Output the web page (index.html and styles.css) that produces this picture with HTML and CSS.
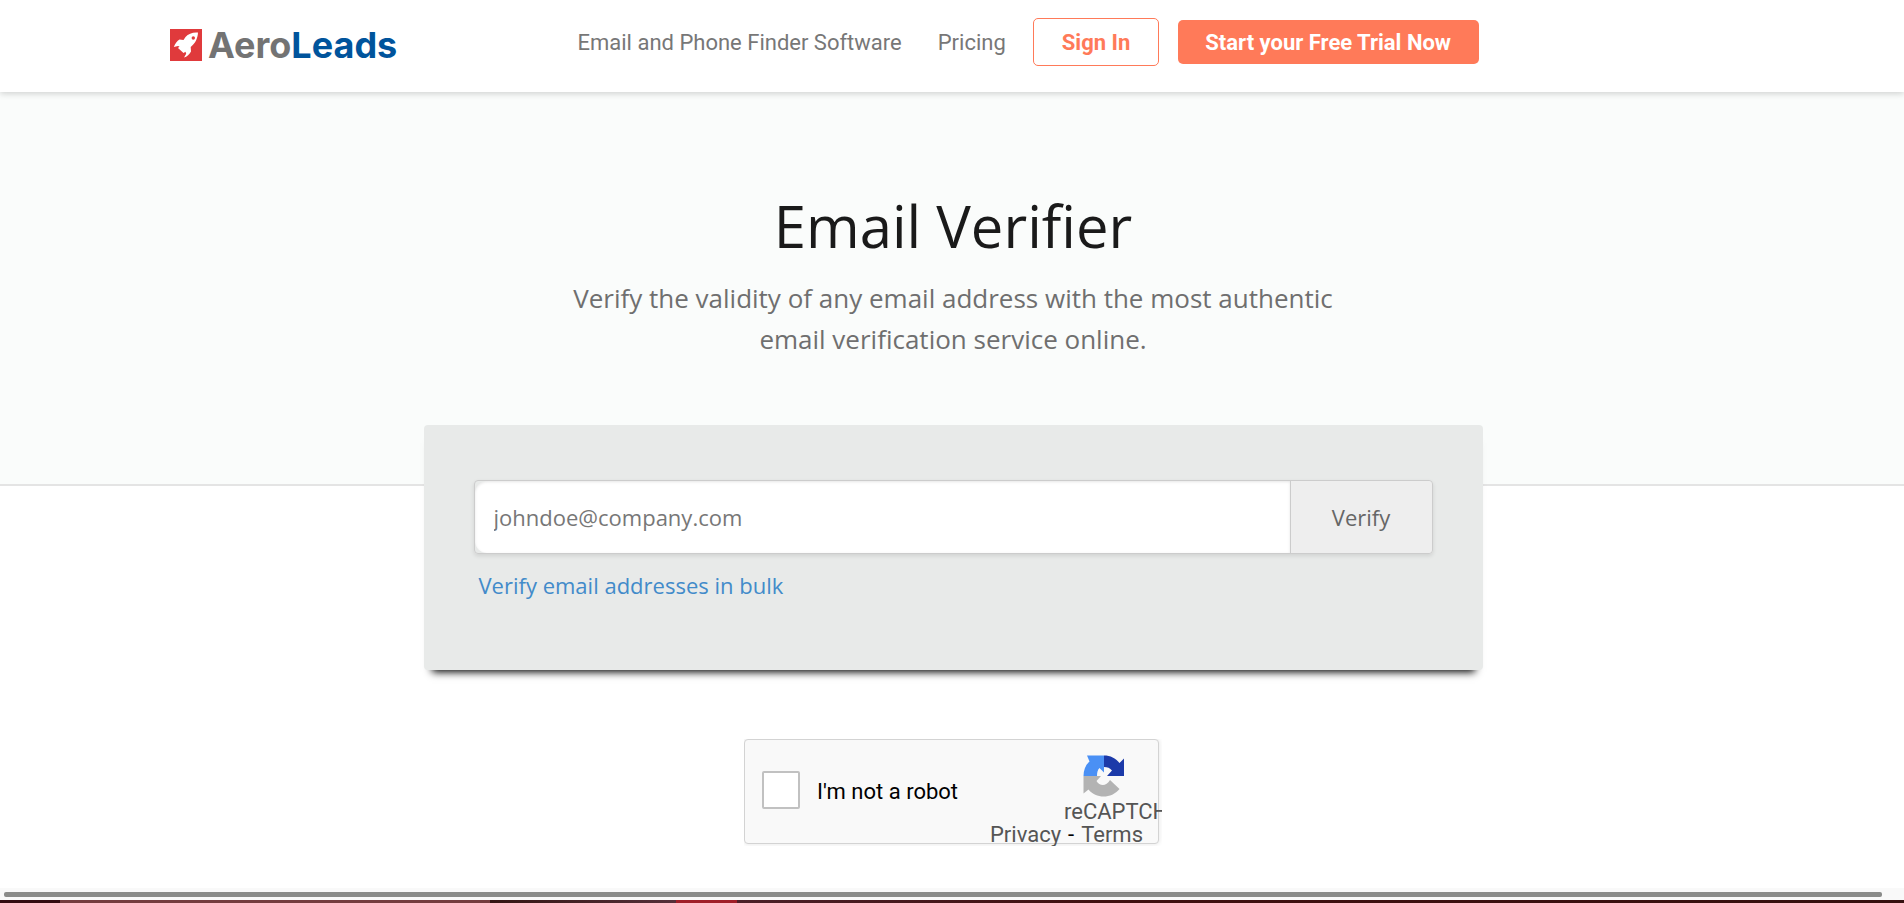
FILE: index.html
```html
<!DOCTYPE html>
<html lang="en">
<head>
    <meta charset="UTF-8">
    <meta name="viewport" content="width=device-width, initial-scale=1.0">
    <title>Email Verifier</title>
    <link rel="stylesheet" href="styles.css">
</head>
<body>
    <header class="header">
        <a href="#" class="logo">
            <svg class="logo-icon" viewBox="0 0 32 32" aria-hidden="true">
                <rect width="32" height="32" fill="#e03a3c"/>
                <path d="M28 3.500c-5-.5-9.500 1-12.500 4.500l-2 3-4-.4c-2.500 1.400-4.200 4-5.700 7.400l4.200-1 1.500.5-1.500 1.500 5.500 5 2-1.200.7 2-2.200 3.700c3-.8 5.500-3 7-6l-.3-4.500c4.500-3.500 7-8.500 7.300-14.500z" fill="#fff"/>
                <circle cx="23.300" cy="9" r="1.700" fill="#e03a3c"/>
            </svg>
            <span class="logo-text">Aero<b>Leads</b></span>
        </a>
        <nav class="nav">
            <a href="#" class="nav-link">Email and Phone Finder Software</a>
            <a href="#" class="nav-link">Pricing</a>
            <a href="#" class="btn btn-outline">Sign In</a>
            <a href="#" class="btn btn-primary">Start your Free Trial Now</a>
        </nav>
    </header>

    <main>
        <section class="hero">
            <h1>Email Verifier</h1>
            <p>Verify the validity of any email address with the most authentic email verification service online.</p>
        </section>

        <section class="panel">
            <form class="verify-form">
                <input type="email" class="verify-input" aria-label="Email address" placeholder="johndoe@company.com">
                <button type="submit" class="verify-button">Verify</button>
            </form>
            <a href="#" class="bulk-link">Verify email addresses in bulk</a>
        </section>

        <div class="captcha">
            <div class="captcha-box">
                <input type="checkbox" id="robot" class="captcha-check">
                <label for="robot">I'm not a robot</label>
            </div>
            <div class="captcha-brand">
                <svg class="captcha-icon" viewBox="0 0 42 42" aria-hidden="true">
                    <path d="M21 .500v17l-4.500-4.500c-2 2-2.500 4.500-2.500 8H.500c0-6 2-11 6-14.500L4 .500z" fill="#4a90f5"/>
                    <path d="M21 .500c6.500 0 11.500 2.500 15.500 7.500L41 3.500V21H24l5-5.500c-2-2.500-4.500-3.500-8-3.500z" fill="#1c3aa9"/>
                    <path d="M.500 21H18l-4.500 5c3 5 9.500 6 13.500-1l9.500 9c-8 10-23.500 10-31 .500L.500 38.500z" fill="#b3b3b3"/>
                </svg>
                <span class="captcha-name">reCAPTCHA</span>
            </div>
            <div class="captcha-links"><a href="#">Privacy</a><span>-</span><a href="#">Terms</a></div>
        </div>
    </main>

    <footer class="bottom">
        <div class="scroll-track"><div class="scroll-thumb"></div></div>
        <div class="strip"></div>
    </footer>
</body>
</html>
```
FILE: styles.css
```css
* {
    margin: 0;
    padding: 0;
    box-sizing: border-box;
}

body {
    display: flex;
    flex-direction: column;
    min-height: 100vh;
    overflow-x: hidden;
    font-family: "Open Sans", sans-serif;
    background-color: #fff;
    color: #6f6f6f;
}

a {
    text-decoration: none;
}

/* a little wider than the window */
main {
    flex: 1;
    width: calc(100% + 2px);
}

.header {
    position: relative;
    display: flex;
    justify-content: space-between;
    align-items: flex-start;
    height: 92px;
    padding: 18px 425px 0 170px;
    background-color: #fff;
    box-shadow: 0 2px 6px rgba(0, 0, 0, 0.16);
}

.logo {
    display: flex;
    align-items: center;
    gap: 6px;
    padding-top: 4px;
}

.logo-icon {
    width: 32px;
    height: 32px;
}

.logo-text {
    font-family: Inter, sans-serif;
    font-size: 36px;
    line-height: 46px;
    font-weight: bold;
    color: #737373;
}

.logo-text b {
    font-weight: bold;
    color: #00549c;
}

.nav {
    display: flex;
    align-items: center;
    font-family: Roboto, sans-serif;
    font-size: 22px;
    line-height: 26px;
}

.nav-link {
    margin-right: 36px;
    padding-top: 2px;
    color: #777;
}

.nav-link:nth-child(2) {
    margin-right: 27px;
}

.btn {
    padding: 10px 27px 8px;
    border-radius: 5px;
    font-weight: bold;
}

.btn-outline {
    padding: 11px 28px 9px;
    margin-right: 19px;
    border: 1px solid #ff7a59;
    color: #ff7a59;
}

.btn-primary {
    padding-right: 28px;
    background-color: #ff7a59;
    color: #fff;
}

.hero {
    height: 394px;
    padding-top: 94px;
    border-bottom: 2px solid #e4e4e4;
    background-color: #fafcfb;
    text-align: center;
}

.hero h1 {
    font-size: 58px;
    line-height: 80px;
    font-weight: normal;
    color: #1a1a1a;
}

.hero p {
    width: 800px;
    margin: 12px auto 0;
    font-size: 26px;
    line-height: 41px;
}

.panel {
    position: relative;
    width: 1059px;
    height: 245px;
    margin: -61px auto 0;
    padding: 55px 50px;
    border-radius: 4px;
    background-color: #e8eae9;
    box-shadow: 0 10px 8px -8px #000;
}

.verify-form {
    display: flex;
    height: 74px;
    border: 1px solid #ccc;
    border-radius: 4px;
    box-shadow: 0 2px 4px rgba(0, 0, 0, 0.1);
}

.verify-input {
    flex: 1;
    padding: 0 19px;
    border: none;
    border-radius: 12px 0 0 12px;
    background-color: #fff;
    box-shadow: inset 0 1px 3px rgba(0, 0, 0, 0.1);
    font-family: inherit;
    font-size: 22px;
}

.verify-input::placeholder {
    color: #777;
}

.verify-button {
    width: 142px;
    border: none;
    border-left: 1px solid #ccc;
    border-radius: 0 4px 4px 0;
    background-color: #eee;
    font-family: inherit;
    font-size: 22px;
    color: #666;
}

.bulk-link {
    display: inline-block;
    margin: 16px 5px;
    font-size: 22px;
    line-height: 30px;
    color: #428bca;
}

.captcha {
    position: relative;
    width: 418px;
    height: 107px;
    margin: 69px auto 0;
    overflow: hidden;
    font-family: Roboto, sans-serif;
    font-size: 22px;
    line-height: 24px;
}

.captcha-box {
    display: flex;
    align-items: center;
    gap: 17px;
    width: 415px;
    height: 105px;
    padding-left: 17px;
    border: 1px solid #d3d3d3;
    border-radius: 4px;
    background-color: #f9f9f9;
    box-shadow: 0 0 4px 1px rgba(0, 0, 0, 0.08);
    color: #000;
}

.captcha-check {
    appearance: none;
    width: 38px;
    height: 38px;
    margin-bottom: 3px;
    border: 2px solid #c1c1c1;
    border-radius: 2px;
    background-color: #fff;
}

/* brand and links lie over the box and are cut at its right edge */
.captcha-brand {
    position: absolute;
    top: 16px;
    left: 320px;
    color: #555;
}

.captcha-icon {
    display: block;
    width: 42px;
    height: 42px;
    margin-left: 19px;
}

.captcha-name {
    display: block;
    line-height: 30px;
}

.captcha-links {
    position: absolute;
    top: 84px;
    right: 19px;
    display: flex;
    gap: 7px;
    color: #000;
}

.captcha-links a {
    color: #555;
}

.scroll-track {
    padding: 4px 22px 3px 4px;
    background-color: #f9f9f9;
}

.scroll-thumb {
    height: 5px;
    border-radius: 2px;
    background-color: #8a8b89;
}

.strip {
    height: 3px;
    background: linear-gradient(to right, #330a10 60px, #743c3e 60px, #743c3e 490px, #341513 490px, #55303a 676px, #a01e28 676px, #a01e28 737px, #4b2028 737px, #401010 1100px, #35100f);
}
```
